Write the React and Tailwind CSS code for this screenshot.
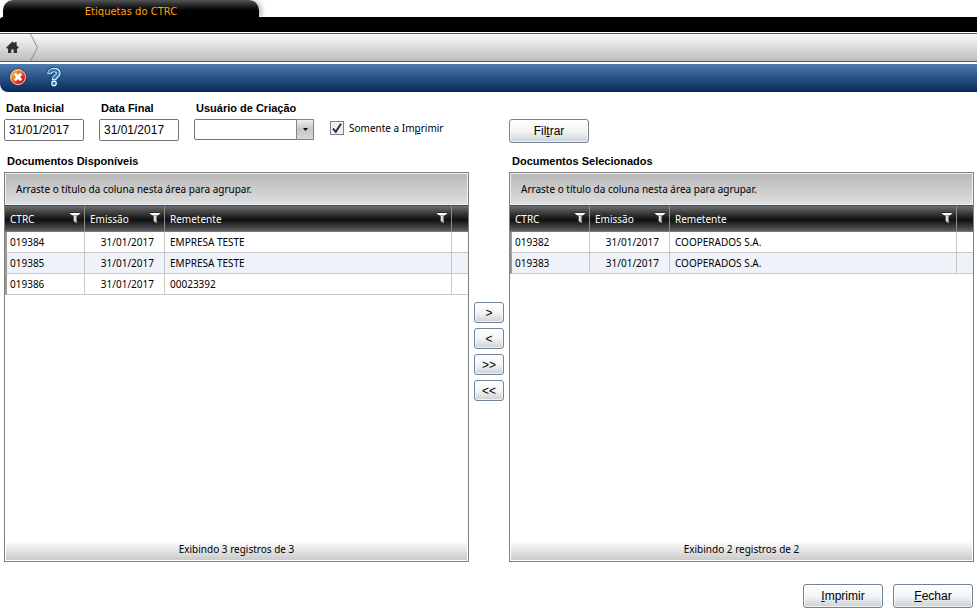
const available = [
  { ctrc: "019384", date: "31/01/2017", sender: "EMPRESA TESTE" },
  { ctrc: "019385", date: "31/01/2017", sender: "EMPRESA TESTE" },
  { ctrc: "019386", date: "31/01/2017", sender: "00023392" },
];

const selected = [
  { ctrc: "019382", date: "31/01/2017", sender: "COOPERADOS S.A." },
  { ctrc: "019383", date: "31/01/2017", sender: "COOPERADOS S.A." },
];

const moves = [
  { text: ">", label: "Adicionar" },
  { text: "<", label: "Remover" },
  { text: ">>", label: "Adicionar todos" },
  { text: "<<", label: "Remover todos" },
];

const FunnelIcon = () => (
  <svg width="12" height="13" viewBox="0 0 12 13" className="shrink-0">
    <path d="M0 0.5H12L8.5 4.5V13L4 9.5V4.5Z" fill="#1c1c1c" />
    <path d="M1 1H11L7.8 4.5V11.5L4.6 9V4.5Z" fill="#a5a5a5" />
    <path d="M0.5 1H11.5L9.5 3H2.5Z" fill="#fff" />
    <path d="M5 4H6.5V10L5 9Z" fill="#eee" />
  </svg>
);

const HomeIcon = () => (
  <svg width="13" height="13" viewBox="0 0 13 13" fill="#303030">
    <path d="M6.5 0.5L8.7 2.6V1H10.6V4.4L12.8 6.6L12 7.4H11V12H7.7V8.4H5.3V12H2V7.4H1L0.2 6.6Z" />
  </svg>
);

const CloseIcon = () => (
  <svg width="18" height="18" viewBox="0 0 18 18">
    <defs>
      <linearGradient id="close-fill" x1="0" y1="0" x2="1" y2="1">
        <stop offset="0.15" stopColor="#f7b52c" />
        <stop offset="0.5" stopColor="#e8622a" />
        <stop offset="0.7" stopColor="#dc2026" />
      </linearGradient>
    </defs>
    <circle cx="9" cy="9" r="8.8" fill="#4d3a45" />
    <circle cx="9" cy="9" r="7.5" fill="url(#close-fill)" stroke="#eadfca" strokeWidth="0.9" />
    <path d="M5.8 5.8L12.2 12.2M12.2 5.8L5.8 12.2" stroke="#fff" strokeWidth="2.8" />
  </svg>
);

const HelpIcon = () => (
  <svg width="16" height="20" viewBox="0 0 16 20" fill="none">
    <path d="M3.4 6.5C3.4 1.8 12.6 1.8 12.4 6.3C12.2 9 8 9 8 12.8" stroke="#17365a" strokeWidth="6" />
    <path d="M3.4 6.8C3.4 1.8 12.6 1.8 12.4 6.3C12.2 9 8 9 8 13.2" stroke="#fff" strokeWidth="4.6" />
    <path d="M3.4 6C3.8 2 12.4 2 12.2 6.3C12 8.8 8 9 8 12.3" stroke="#2382c4" strokeWidth="2.8" />
    <circle cx="8" cy="16.4" r="2.8" fill="#fff" />
    <circle cx="8" cy="16.4" r="1.7" fill="#2382c4" />
  </svg>
);

const Button = ({ children, className, ...props }) => (
  <button
    type="button"
    className={`rounded-[3px] border border-[#718394] bg-linear-to-b from-white via-[#f4f5f6] to-[#ccd1d5] inset-shadow-[0_0_0_1px_#ffffffb0] text-xs text-black ${className}`}
    {...props}
  >
    {children}
  </button>
);

const DateField = ({ id, label }) => (
  <div className="flex w-20 flex-col gap-1">
    <label htmlFor={id} className="pl-0.5 text-[11px] leading-[14px] font-bold">{label}</label>
    <input
      id={id}
      defaultValue="31/01/2017"
      className="h-[22px] w-full rounded-[2px] border border-[#737373] bg-white px-1 text-xs"
    />
  </div>
);

const Grid = ({ title, rows }) => (
  <section className="flex min-w-0 flex-1 flex-col">
    <h2 className="px-[3px] pb-1 text-[11px] leading-[14px] font-bold">{title}</h2>
    <div className="flex flex-1 flex-col border border-[#808080] font-['Noto_Sans',sans-serif] text-[10px] leading-[14px]">
      <div className="h-8 shrink-0 border border-[#e9f0fa] bg-linear-to-b from-[#b9b9b9] to-[#dedede] px-2.5 py-2">
        Arraste o título da coluna nesta área para agrupar.
      </div>
      <table className="w-full table-fixed border-separate border-spacing-0">
        <colgroup>
          <col className="w-20" />
          <col className="w-20" />
          <col />
          <col className="w-4" />
        </colgroup>
        <thead>
          <tr className="h-[27px] bg-linear-to-b from-[#777] via-[#111] via-55% to-[#666] text-white">
            {["CTRC", "Emissão", "Remetente"].map((name) => (
              <th key={name} scope="col" className="border-y border-r border-t-[#4b4b4b] border-r-[#8b8b8b] border-b-[#777] py-0 pr-[3px] pl-[5px] text-left font-normal">
                <div className="flex items-center justify-between">
                  {name}
                  <FunnelIcon />
                </div>
              </th>
            ))}
            <td className="border-y border-t-[#4b4b4b] border-b-[#777]" />
          </tr>
        </thead>
        <tbody>
          {rows.map((row) => (
            <tr key={row.ctrc} className="h-[21px] even:bg-[#eff3f9]">
              <td className="border-r border-b border-l-2 border-[#c8c8c8] border-l-[#999] p-0 pl-[3px]">{row.ctrc}</td>
              <td className="border-r border-b border-[#c8c8c8] p-0 pr-2.5 text-right">{row.date}</td>
              <td className="border-r border-b border-[#c8c8c8] p-0 pl-[5px]">{row.sender}</td>
              <td className="border-b border-[#c8c8c8]" />
            </tr>
          ))}
        </tbody>
      </table>
      <div className="mx-px mt-auto mb-px h-[18px] bg-linear-to-b from-[#fbfbfb] to-[#cbcbcb] text-center">
        Exibindo {rows.length} registros de {rows.length}
      </div>
    </div>
  </section>
);

export default function App() {
  return (
    <div className="flex min-h-screen flex-col bg-white font-['Liberation_Sans',Arial,sans-serif] text-black">
      <header>
        <div className="flex h-[17px] pl-[3px]">
          <div className="w-64 rounded-t-[10px] bg-linear-to-b from-[#555] to-black to-80% pt-[5px] text-center font-['DejaVu_Sans',sans-serif] text-[10px] leading-[14px] text-[#ffa500] shadow-[3px_0_5px_#00000040]">
            Etiquetas do CTRC
          </div>
        </div>
        <div className="relative h-[15px] rounded-tl-[3px] bg-black" />
        <nav className="mt-px flex h-[29px] items-center border-y border-[#58585a] bg-linear-to-b from-[#fafafa] to-[#bdbdc0]">
          <a href="#" aria-label="Início" className="pl-1.5">
            <HomeIcon />
          </a>
          <svg width="8" height="27" viewBox="0 0 8 27" fill="none" className="ml-[11px]">
            <path d="M0.5 0L7.5 13.5L0.5 27" stroke="#8d8d8f" />
          </svg>
        </nav>
        <div className="mt-0.5 flex h-7 items-center gap-[19px] rounded-bl-[8px] bg-linear-to-b from-[#4d7caf] to-[#06295a] pb-0.5 pl-[9px]">
          <button type="button" aria-label="Fechar janela"><CloseIcon /></button>
          <button type="button" aria-label="Ajuda"><HelpIcon /></button>
        </div>
      </header>

      <main className="flex flex-1 flex-col pt-[9px] pr-[3px] pb-1 pl-1">
        <form className="flex gap-10">
          <div className="flex min-w-0 flex-1">
            <div className="flex gap-[15px]">
              <DateField id="start" label="Data Inicial" />
              <DateField id="end" label="Data Final" />
              <div className="flex w-[120px] flex-col gap-1">
                <label htmlFor="user" className="pl-0.5 text-[11px] leading-[14px] font-bold">Usuário de Criação</label>
                <div className="relative">
                  <select id="user" className="block h-[21px] w-full appearance-none rounded-[2px] border border-[#737373] bg-white px-1 text-xs" />
                  <span className="pointer-events-none absolute inset-y-0 right-0 flex w-[18px] items-center justify-center border border-[#858585] bg-linear-to-b from-[#eee] via-[#c6c6c6] to-[#d8d8d8]">
                    <svg width="5" height="3" viewBox="0 0 5 3"><path d="M0 0H5L2.5 3Z" /></svg>
                  </span>
                </div>
              </div>
            </div>
            <label className="ml-4 flex items-center gap-[5px] self-end pb-1.5 font-['Noto_Sans',sans-serif] text-[10px] leading-[14px]">
              <span className="relative">
                <input type="checkbox" defaultChecked className="peer block size-3.5 appearance-none border border-[#718394] bg-[#eef1f4]" />
                <svg width="14" height="14" viewBox="0 0 14 14" fill="none" className="pointer-events-none absolute inset-0 hidden peer-checked:block">
                  <path d="M3 7.5L5.8 10.8L11 2.8" stroke="#303438" strokeWidth="2" />
                </svg>
              </span>
              <span>Somente a Im<u>p</u>rimir</span>
            </label>
          </div>
          <div className="flex min-w-0 flex-1 items-end">
            <Button className="-mb-0.5 h-6 w-20">Fil<u>t</u>rar</Button>
          </div>
        </form>

        <div className="mt-[13px] flex flex-1">
          <Grid title="Documentos Disponíveis" rows={available} />
          <div className="flex w-10 shrink-0 flex-col items-center gap-[5px] pt-[148px]">
            {moves.map((move) => (
              <Button key={move.text} aria-label={move.label} className="h-[21px] w-[30px] leading-none">
                {move.text}
              </Button>
            ))}
          </div>
          <Grid title="Documentos Selecionados" rows={selected} />
        </div>

        <footer className="mt-[22px] flex justify-end gap-2.5 pr-px">
          <Button className="h-6 w-20"><u>I</u>mprimir</Button>
          <Button className="h-6 w-20"><u>F</u>echar</Button>
        </footer>
      </main>
    </div>
  );
}
